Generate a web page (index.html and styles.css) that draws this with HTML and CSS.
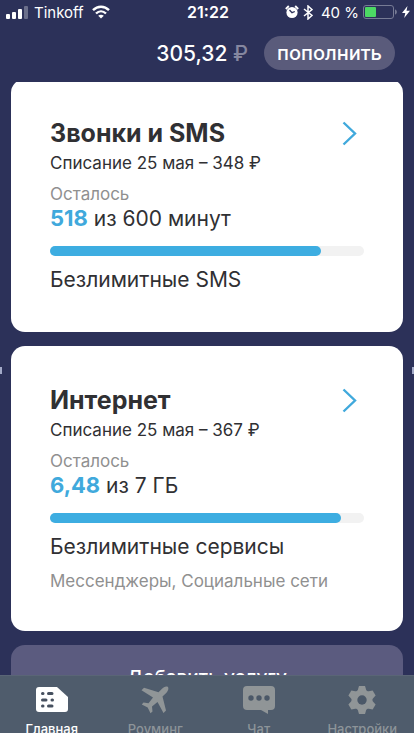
FILE: index.html
```html
<!DOCTYPE html>
<html lang="ru">
<head>
    <meta charset="UTF-8">
    <meta name="viewport" content="width=device-width, initial-scale=1.0">
    <title>Tinkoff Mobile</title>
    <link rel="stylesheet" href="styles.css">
</head>
<body>
    <div class="status-bar">
        <div class="status-left">
            <svg width="22" height="13" viewBox="0 0 22 13" fill="#fff">
                <rect x="0" y="8" width="4" height="5" rx="1"/>
                <rect x="6" y="6" width="4" height="7" rx="1"/>
                <rect x="12" y="3" width="4" height="10" rx="1"/>
                <rect x="18" y="0" width="4" height="13" rx="1" opacity="0.3"/>
            </svg>
            <span>Tinkoff</span>
            <svg class="wifi" width="18" height="14" viewBox="0 0 18 14" fill="none" stroke="#fff" stroke-width="2.4">
                <path d="M1 5.2C5.600 .5 12.400 .5 17 5.200"/>
                <path d="M4 8.500C7 5.600 11 5.600 14 8.500"/>
                <path d="M9 13.500L6.200 10.700C7.900 9.300 10.100 9.300 11.800 10.700Z" fill="#fff" stroke="none"/>
            </svg>
        </div>
        <strong class="time">21:22</strong>
        <div class="status-right">
            <svg width="14" height="14" viewBox="0 0 14 14">
                <circle cx="7" cy="7.500" r="5.600" fill="#fff"/>
                <path d="M.8 4L3.800 1M10.200 1L13.200 4" stroke="#fff" stroke-width="1.800"/>
                <path d="M4.500 5L7 7.700L9.800 6.500" fill="none" stroke="#2c3159" stroke-width="1.300"/>
            </svg>
            <svg width="10" height="15" viewBox="0 0 10 15" fill="none" stroke="#fff" stroke-width="1.500">
                <path d="M1 4L9 10.500L5 14V1L9 4.500L1 11"/>
            </svg>
            <span class="percent">40 %</span>
            <svg width="35" height="14" viewBox="0 0 35 14">
                <rect x=".5" y=".5" width="30" height="13" rx="2.500" fill="none" stroke="#777b95"/>
                <rect x="2" y="2" width="11" height="10" rx="1" fill="#4cd964"/>
                <path d="M32 4.500C34.500 5 34.500 9 32 9.500Z" fill="#777b95"/>
            </svg>
            <svg width="8" height="12" viewBox="0 0 8 12" fill="#fff">
                <path d="M5.500 0L0 7H3.300L2.200 12L8 4.800H4.500Z"/>
            </svg>
        </div>
    </div>

    <header class="balance">
        <span class="amount">305,32 <span class="currency">₽</span></span>
        <button class="top-up">пополнить</button>
    </header>

    <main class="cards">
        <section class="card">
            <div class="card-head">
                <h2>Звонки и SMS</h2>
                <a href="#calls" aria-label="Звонки и SMS">
                    <svg width="15" height="25" viewBox="0 0 15 25" fill="none" stroke="#40a9dc" stroke-width="2.400">
                        <path d="M1.500 1.500L13 12.500L1.500 23.500"/>
                    </svg>
                </a>
            </div>
            <p class="charge">Списание 25 мая – 348 ₽</p>
            <p class="left">Осталось</p>
            <p class="value"><b>518</b> из 600 минут</p>
            <div class="bar"><div class="bar-fill" style="width: 86.3%"></div></div>
            <p class="extra">Безлимитные SMS</p>
        </section>

        <section class="card">
            <div class="card-head">
                <h2>Интернет</h2>
                <a href="#internet" aria-label="Интернет">
                    <svg width="15" height="25" viewBox="0 0 15 25" fill="none" stroke="#40a9dc" stroke-width="2.400">
                        <path d="M1.500 1.500L13 12.500L1.500 23.500"/>
                    </svg>
                </a>
            </div>
            <p class="charge">Списание 25 мая – 367 ₽</p>
            <p class="left">Осталось</p>
            <p class="value"><b>6,48</b> из 7 ГБ</p>
            <div class="bar"><div class="bar-fill" style="width: 92.6%"></div></div>
            <p class="extra">Безлимитные сервисы</p>
            <p class="note">Мессенджеры, Социальные сети</p>
        </section>

        <button class="add-service">Добавить услугу</button>
    </main>

    <nav class="tabs">
        <a class="tab active" href="#home">
            <svg width="32" height="28" viewBox="0 0 32 28">
                <path d="M3 1H21L32 11V23Q32 26 29 26H3Q0 26 0 23V4Q0 1 3 1Z" fill="#fff"/>
                <path d="M6.500 7.500H7M12.500 7.500H16M6.500 14H10M16 14H16.500M6.500 20H7M12.500 20H16" stroke="#46505f" stroke-width="3" stroke-linecap="round"/>
            </svg>
            <span>Главная</span>
        </a>
        <a class="tab" href="#roaming">
            <svg width="28" height="28" viewBox="0 0 28 28" fill="#909597">
                <path d="M27 1C25 -.3 22.500 1.200 21 2.700L17.500 6.200L3 1.800L.5 4.300L12 11.500L7.500 17.200L2.500 16.500L.8 18.500L6.700 21.500L9.500 27.200L11.500 25.500L11 20.500L16.500 16L22.500 27L25 24.500L21.500 10.500L25.200 7C26.800 5.200 28 2.700 27 1Z"/>
            </svg>
            <span>Роуминг</span>
        </a>
        <a class="tab" href="#chat">
            <svg width="32" height="28" viewBox="0 0 32 28">
                <path d="M4 0H28Q32 0 32 4V20Q32 24 28 24H25V28L18 24H4Q0 24 0 20V4Q0 0 4 0Z" fill="#909597"/>
                <g fill="#4b5868">
                    <circle cx="8" cy="12" r="2.700"/>
                    <circle cx="16" cy="12" r="2.700"/>
                    <circle cx="24" cy="12" r="2.700"/>
                </g>
            </svg>
            <span>Чат</span>
        </a>
        <a class="tab" href="#settings">
            <svg width="28" height="28" viewBox="-14 -14 28 28">
                <g fill="#909597">
                    <circle r="10.500"/>
                    <path id="tooth" d="M-4.500 -9L-3 -14H3L4.500 -9V9L3 14H-3L-4.500 9Z"/>
                    <use href="#tooth" transform="rotate(60)"/>
                    <use href="#tooth" transform="rotate(120)"/>
                </g>
                <circle r="4.700" fill="#4b5868"/>
            </svg>
            <span>Настройки</span>
        </a>
    </nav>

    <i class="handle handle-left"></i>
    <i class="handle handle-right"></i>
</body>
</html>
```
FILE: styles.css
```css
* {
    box-sizing: border-box;
}
body {
    margin: 0;
    height: 100vh;
    display: flex;
    flex-direction: column;
    overflow: hidden;
    position: relative;
    background-color: #2c3159;
    color: #303033;
    font-family: Inter, "Noto Sans", sans-serif;
}
h2, p {
    margin: 0;
}
button {
    border: none;
    font-family: inherit;
    color: white;
    cursor: pointer;
}
a {
    text-decoration: none;
}
svg {
    display: block;
    flex-shrink: 0;
}

/* status bar */
.status-bar {
    display: grid;
    grid-template-columns: 1fr auto 1fr;
    align-items: center;
    height: 24px;
    padding: 0 4px 0 6px;
    color: white;
    font-size: 15px;
    flex-shrink: 0;
}
.status-left, .status-right {
    display: flex;
    align-items: center;
    gap: 6px;
}
.status-right {
    justify-content: flex-end;
    gap: 4px;
}
.wifi {
    margin-left: 2px;
}
.time {
    font-size: 16px;
    font-weight: 600;
}
.percent {
    margin-left: 4px;
    white-space: nowrap;
}

/* balance */
.balance {
    display: flex;
    justify-content: flex-end;
    align-items: center;
    gap: 16px;
    height: 58px;
    padding-right: 19px;
    flex-shrink: 0;
}
.amount {
    color: white;
    font-size: 21px;
    font-weight: 500;
}
.currency {
    color: #8587a0;
}
.top-up {
    height: 34px;
    padding: 0 13px;
    border-radius: 17px;
    background-color: #5a5b7b;
    font-size: 20px;
    font-weight: 500;
}

/* cards */
.cards {
    flex: 1;
    min-height: 0;
    overflow: hidden;
    display: flex;
    flex-direction: column;
    gap: 14px;
    padding: 0 11px;
}
.card {
    flex-shrink: 0;
    padding: 38px 39px;
    border-radius: 14px;
    background-color: white;
}
/* list is scrolled a little under the header */
.card:first-child {
    margin-top: -3px;
}
.card-head {
    display: flex;
    justify-content: space-between;
    align-items: center;
    height: 32px;
    padding-right: 7px;
}
h2 {
    font-size: 25px;
    font-weight: 700;
}
.charge {
    font-size: 17px;
    line-height: 28px;
}
.left {
    margin-top: 6px;
    color: #909090;
    font-size: 17px;
    line-height: 22px;
}
.value {
    font-size: 21px;
    line-height: 26px;
}
.value b {
    color: #40a9dc;
    font-size: 22px;
}
.bar {
    height: 10px;
    margin: 14px 0 10px;
    border-radius: 5px;
    background-color: #f2f2f2;
}
.bar-fill {
    height: 10px;
    border-radius: 5px;
    background-color: #3dade1;
}
.extra {
    font-size: 21px;
    line-height: 28px;
}
.note {
    margin-top: 8px;
    color: #909090;
    font-size: 17px;
    line-height: 24px;
}
.add-service {
    flex-shrink: 0;
    height: 64px;
    border-radius: 14px;
    background-color: #5b5b7f;
    font-size: 19px;
    font-weight: 500;
}

/* bottom tabs */
.tabs {
    display: grid;
    grid-template-columns: repeat(4, 1fr);
    height: 58px;
    padding-top: 10px;
    overflow: hidden;
    background-color: #4f5c6c;
    border-top: 1px solid #5a6576;
    flex-shrink: 0;
}
.tab {
    display: flex;
    flex-direction: column;
    align-items: center;
    gap: 6px;
    color: #8d9499;
    font-size: 13px;
    font-weight: 500;
    line-height: 18px;
}
.tab.active {
    color: white;
}

/* resize handles on the screen edges */
.handle {
    position: absolute;
    top: 50%;
    width: 2px;
    height: 7px;
    background-color: #a3aac8;
}
.handle-left {
    left: 0;
}
.handle-right {
    right: 0;
}
```
